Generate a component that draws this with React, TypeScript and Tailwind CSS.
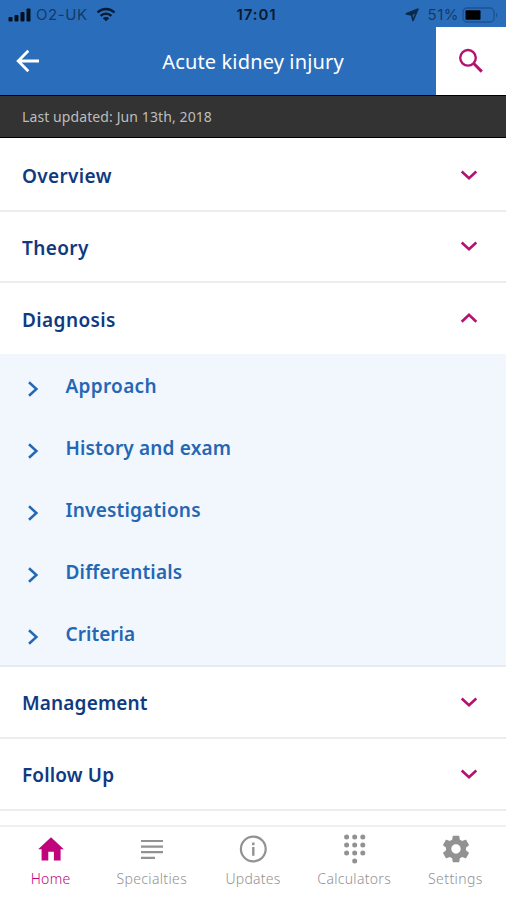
import React, { useState } from "react";
import clsx from "clsx";

type Section = {
  title: string;
  row: string;
  tracking: string;
  items?: { label: string; tracking: string }[];
};

const sections: Section[] = [
  { title: "Overview", row: "h-[74px] border-b-2 pt-1", tracking: "tracking-[0.35px]" },
  { title: "Theory", row: "h-[71px] border-b-2 pt-[2px]", tracking: "tracking-[0.4px]" },
  {
    title: "Diagnosis",
    row: "h-[71px] pt-[2px]",
    tracking: "tracking-[0.4px]",
    items: [
      { label: "Approach", tracking: "tracking-[0.3px]" },
      { label: "History and exam", tracking: "tracking-[0.17px]" },
      { label: "Investigations", tracking: "tracking-[0.2px]" },
      { label: "Differentials", tracking: "tracking-[0.17px]" },
      { label: "Criteria", tracking: "tracking-[0.05px]" },
    ],
  },
  { title: "Management", row: "h-[72px] border-b-2 pt-[2px]", tracking: "tracking-[0.15px]" },
  { title: "Follow Up", row: "h-[72px] border-b-2 pt-[2px]", tracking: "tracking-[0.15px]" },
];

const HomeIcon = () => (
  <svg width="28" height="28" viewBox="0 0 28 28" fill="currentColor">
    <path d="M14 2.3 26.8 14.2H23.6v11.2h-6.7v-8.6h-5.6v8.6H4.6V14.2H1.2z" />
  </svg>
);

const ListIcon = () => (
  <svg width="28" height="28" viewBox="0 0 28 28" stroke="currentColor" strokeWidth="2.2">
    <path d="M3 6h22M3 11.6h22M3 17.2h22M3 22.8h14" />
  </svg>
);

const InfoIcon = () => (
  <svg width="28" height="28" viewBox="0 0 28 28" fill="none" stroke="currentColor">
    <circle cx="14.3" cy="14" r="12.4" strokeWidth="2.2" />
    <path d="M14.3 12v8.8M14.3 7.5v2.7" strokeWidth="2.4" />
  </svg>
);

const KeypadIcon = () => (
  <svg width="28" height="30" viewBox="0 0 28 30" fill="currentColor">
    {[3, 11, 19].map((y) =>
      [6.6, 14.7, 22.8].map((x) => <circle key={`${x}-${y}`} cx={x} cy={y} r="2.5" />)
    )}
    <circle cx="14.7" cy="27" r="2.5" />
  </svg>
);

const GearIcon = () => (
  <svg className="ml-px" width="32" height="32" viewBox="0 0 24 24" fill="currentColor">
    <path d="M19.43 12.98c.04-.32.07-.64.07-.98s-.03-.66-.07-.98l2.11-1.65c.19-.15.24-.42.12-.64l-2-3.46c-.12-.22-.39-.3-.61-.22l-2.49 1c-.52-.4-1.08-.73-1.69-.98l-.38-2.65C14.46 2.18 14.25 2 14 2h-4c-.25 0-.46.18-.49.42l-.38 2.65c-.61.25-1.17.59-1.69.98l-2.49-1c-.23-.09-.49 0-.61.22l-2 3.46c-.13.22-.07.49.12.64l2.11 1.65c-.04.32-.07.65-.07.98s.03.66.07.98l-2.11 1.65c-.19.15-.24.42-.12.64l2 3.46c.12.22.39.3.61.22l2.49-1c.52.4 1.08.73 1.69.98l.38 2.65c.03.24.24.42.49.42h4c.25 0 .46-.18.49-.42l.38-2.65c.61-.25 1.17-.59 1.69-.98l2.49 1c.23.09.49 0 .61-.22l2-3.46c.12-.22.07-.49-.12-.64zM12 15.5c-1.93 0-3.5-1.57-3.5-3.5s1.57-3.5 3.5-3.5 3.5 1.57 3.5 3.5-1.57 3.5-3.5 3.5" />
  </svg>
);

const tabs = [
  { label: "Home", icon: <HomeIcon />, tracking: "tracking-[0.3px]" },
  { label: "Specialties", icon: <ListIcon />, tracking: "tracking-[0.35px]" },
  { label: "Updates", icon: <InfoIcon />, tracking: "tracking-[0.2px]" },
  { label: "Calculators", icon: <KeypadIcon />, tracking: "tracking-[0.3px]" },
  { label: "Settings", icon: <GearIcon />, tracking: "tracking-[0.4px]" },
];

const StatusBar = () => (
  <div className="grid h-[27px] grid-cols-3 items-center pt-[2px] font-['Inter',sans-serif] text-[15px] leading-none">
    <div className="flex items-center pl-2 text-[#123a68]">
      <svg width="24" height="14" viewBox="0 0 24 14" fill="#04101f">
        <rect x="0.5" y="9" width="4" height="4.5" rx="1" />
        <rect x="6.5" y="7" width="4" height="6.5" rx="1" />
        <rect x="12.5" y="4" width="4" height="9.5" rx="1" />
        <rect x="18.5" y="0.5" width="4" height="13" rx="1" />
      </svg>
      <span className="ml-1 tracking-[0.6px]">O2-UK</span>
      <svg className="ml-2" width="20" height="15" viewBox="0 0 20 15" fill="none" stroke="#071b33">
        <path d="M1.5 5.5a12.2 12.2 0 0 1 17 0M4.6 8.8a7.8 7.8 0 0 1 10.8 0" strokeWidth="2.4" />
        <path d="M10 14.2 6.8 11.2a4.6 4.6 0 0 1 6.4 0z" fill="#071b33" stroke="none" />
      </svg>
    </div>
    <div className="pl-[7px] text-center font-semibold tracking-[0.9px] text-[#061a30]">17:01</div>
    <div className="flex items-center justify-end pr-[6px] text-[#123a68]">
      <svg width="14" height="14" viewBox="0 0 14 14" fill="none" stroke="#0b2a4c" strokeWidth="1.7" strokeLinejoin="round">
        <path d="M12.7 1.3 1.3 5.8l5.4 1.2z" fill="#0b2a4c" />
        <path d="M12.7 1.3 6.7 7 8 12.5z" />
      </svg>
      <span className="ml-[9px] tracking-[0.5px]">51%</span>
      <svg className="ml-[3px]" width="38" height="16" viewBox="0 0 38 16">
        <rect x="1" y="1" width="31" height="14" rx="4" fill="none" stroke="#1d5292" strokeWidth="1.3" />
        <rect x="3.5" y="3.3" width="15" height="9.4" rx="1" fill="#000" />
        <path d="M34 5.5a3 3 0 0 1 0 5z" fill="#1d5292" />
      </svg>
    </div>
  </div>
);

const Chevron = ({ open }: { open: boolean }) => (
  <svg className="mb-[3px]" width="18" height="12" viewBox="0 0 18 12" fill="none" stroke="#b5126f" strokeWidth="2.6">
    <path d={open ? "M1.7 9.7 9 2.7l7.3 7" : "M1.7 2.5 9 9.3l7.3-6.8"} />
  </svg>
);

const App = () => {
  const [openSection, setOpenSection] = useState("Diagnosis");
  const [activeTab, setActiveTab] = useState("Home");

  const toggleSection = (title: string) =>
    setOpenSection((prev) => (prev === title ? "" : title));

  return (
    <div className="flex h-[900px] w-[506px] flex-col overflow-hidden bg-white font-['Noto_Sans',sans-serif]">
      <header className="bg-[#2a6ebb]">
        <StatusBar />
        <div className="flex h-[68px]">
          <button className="flex w-[70px] items-center pl-4">
            <svg width="24" height="24" viewBox="0 0 24 24" fill="none" stroke="#fff" strokeWidth="2.8">
              <path d="M23 12H2.5M12.3 1.8 2.2 12l10.1 10.2" />
            </svg>
          </button>
          <h1 className="flex flex-1 items-center justify-center pt-[2px] text-[20px] font-normal tracking-[0.15px] text-white">
            Acute kidney injury
          </h1>
          <button className="flex w-[70px] items-center justify-center bg-white">
            <svg width="26" height="26" viewBox="0 0 26 26" fill="none" stroke="#b5126f">
              <circle cx="10" cy="9.8" r="7.8" strokeWidth="2.4" />
              <path d="m15.5 15.3 8.3 8.3" strokeWidth="3" />
            </svg>
          </button>
        </div>
      </header>

      <div className="flex h-[43px] shrink-0 items-center border-y border-black bg-[#333] pl-[22px] text-[14px] tracking-[0.1px] text-[#bdbdbd]">
        Last updated: Jun 13th, 2018
      </div>

      <main className="flex-1 overflow-hidden">
        {sections.map(({ title, row, tracking, items }) => (
          <section key={title}>
            <button
              className={clsx("flex w-full items-center justify-between border-[#ececec] pr-7 pl-[22px]", row)}
              onClick={() => toggleSection(title)}
            >
              <span className={clsx("pt-px text-[19px] font-semibold text-[#0f3a80]", tracking)}>{title}</span>
              <Chevron open={openSection === title} />
            </button>
            {items && openSection === title && (
              <ul className="h-[313px] border-b-2 border-[#e6eaec] bg-[#f1f7fd] pt-px">
                {items.map((item) => (
                  <li key={item.label} className="flex h-[62px] items-center pl-[27px]">
                    <svg className="mt-[5px]" width="12" height="16" viewBox="0 0 12 16" fill="none" stroke="#2368b5" strokeWidth="2.5">
                      <path d="m2 1.3 7.4 6.7L2 14.7" />
                    </svg>
                    <span className={clsx("ml-[26.5px] text-[19px] font-semibold text-[#2467b4]", item.tracking)}>
                      {item.label}
                    </span>
                  </li>
                ))}
              </ul>
            )}
          </section>
        ))}
      </main>

      <nav className="grid h-[75px] shrink-0 grid-cols-5 border-t-2 border-[#efefef]">
        {tabs.map(({ label, icon, tracking }) => (
          <button
            key={label}
            className={clsx(
              "flex flex-col items-center pt-[6px]",
              activeTab === label ? "text-[#c0047c]" : "text-[#929292]"
            )}
            onClick={() => setActiveTab(label)}
          >
            <span className="flex h-8 items-center">{icon}</span>
            <span className={clsx("mt-1 text-[14px] leading-5 font-light", tracking)}>{label}</span>
          </button>
        ))}
      </nav>
    </div>
  );
};

export default App;
